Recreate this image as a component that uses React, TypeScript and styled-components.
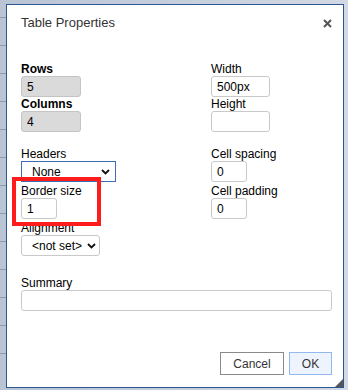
import React from "react";
import styled, { createGlobalStyle } from "styled-components";

const GlobalStyle = createGlobalStyle`
  html, body {
    margin: 0;
    padding: 0;
  }
  body {
    width: 348px;
    height: 390px;
    overflow: hidden;
    background: #c8d1de;
    font-family: "Liberation Sans", Arial, sans-serif;
  }
`;

const Page = styled.div`
  box-sizing: border-box;
  width: 348px;
  height: 390px;
  padding: 4px 4px 2px 6px;
  background:
    repeating-linear-gradient(to bottom, transparent 0 27px, #8f9aab 27px 28px) 0 -10px / 6px 100% no-repeat,
    linear-gradient(to right, #b9c4d4, #d2d9e4);
`;

const Dialog = styled.div`
  position: relative;
  box-sizing: border-box;
  width: 338px;
  height: 384px;
  border: 1px solid #2c5593;
  background: #fff;
  display: flex;
  flex-direction: column;
`;

const Header = styled.div`
  display: flex;
  align-items: center;
  justify-content: space-between;
  height: 15px;
  padding: 10px 11px 0 14px;
`;

const Title = styled.h1`
  margin: 0;
  font-size: 13px;
  font-weight: normal;
  line-height: 15px;
  color: #333;
`;

const Close = styled.button`
  display: flex;
  width: 9px;
  height: 9px;
  margin-top: 2px;
  padding: 0;
  border: 0;
  background: none;
  cursor: pointer;
`;

const Body = styled.div`
  padding: 32px 11px 0 14px;
`;

const Grid = styled.div`
  display: grid;
  grid-template-columns: 190px 1fr;
  row-gap: 15px;
`;

const Column = styled.div<{ $gap: number }>`
  display: flex;
  flex-direction: column;
  align-items: flex-start;
  gap: ${(p) => p.$gap}px;
`;

const Field = styled.div`
  display: flex;
  flex-direction: column;
  align-items: flex-start;
`;

const Label = styled.label<{ $bold?: boolean }>`
  display: block;
  font-size: 12px;
  line-height: 14px;
  font-weight: ${(p) => (p.$bold ? "bold" : "normal")};
  color: #000;
`;

const Input = styled.input<{ $width: string; $disabled?: boolean }>`
  box-sizing: border-box;
  width: ${(p) => p.$width};
  height: 21px;
  margin: 0;
  padding: 0 5px;
  border: 1px solid ${(p) => (p.$disabled ? "#c4c4c4" : "#c9c9c9")};
  border-radius: 3px;
  background: ${(p) => (p.$disabled ? "#dadada" : "#fff")};
  font-family: inherit;
  font-size: 12px;
  color: #000;
  outline: none;
`;

const SelectWrap = styled.div<{ $width: number }>`
  position: relative;
  width: ${(p) => p.$width}px;
  height: 21px;
`;

const Select = styled.select<{ $focused?: boolean }>`
  appearance: none;
  -webkit-appearance: none;
  box-sizing: border-box;
  width: 100%;
  height: 21px;
  margin: 0;
  padding: 0 0 0 10px;
  border: 1px solid ${(p) => (p.$focused ? "#3d6cb4" : "#c9c9c9")};
  border-radius: ${(p) => (p.$focused ? "0" : "3px")};
  background: #fff;
  font-family: inherit;
  font-size: 12px;
  color: #000;
  outline: none;
`;

const Chevron = styled.svg<{ $right: number }>`
  position: absolute;
  top: 8px;
  right: ${(p) => p.$right}px;
  pointer-events: none;
`;

const Summary = styled(Field)`
  margin-top: 20px;
`;

const Footer = styled.div`
  display: flex;
  justify-content: flex-end;
  gap: 5px;
  margin-top: auto;
  padding: 0 11px 12px 14px;
`;

const Button = styled.button<{ $primary?: boolean; $width: number }>`
  box-sizing: border-box;
  width: ${(p) => p.$width}px;
  height: 23px;
  padding: 0;
  border: 1px solid ${(p) => (p.$primary ? "#93b8ee" : "#8a8a8a")};
  background: ${(p) => (p.$primary ? "#eef4fd" : "#fff")};
  font-family: inherit;
  font-size: 12px;
  color: #333;
  cursor: pointer;
`;

const Highlight = styled.div`
  position: absolute;
  left: 5px;
  top: 172px;
  width: 89px;
  height: 49px;
  box-sizing: border-box;
  border: 4px solid #ff1c1c;
  pointer-events: none;
`;

const Grip = styled.svg`
  position: absolute;
  right: 0;
  bottom: 0;
`;

const ChevronIcon = ({ right }: { right: number }) => (
  <Chevron $right={right} width="9" height="6" viewBox="0 0 9 6">
    <path d="M1 1 L4.5 4.5 L8 1" fill="none" stroke="#111" strokeWidth="1.8" />
  </Chevron>
);

export default function App() {
  return (
    <Page>
      <GlobalStyle />
      <Dialog>
        <Header>
          <Title>Table Properties</Title>
          <Close aria-label="Close">
            <svg width="9" height="9" viewBox="0 0 9 9">
              <path d="M1 1 L8 8 M8 1 L1 8" stroke="#555" strokeWidth="2" />
            </svg>
          </Close>
        </Header>

        <Body>
          <Grid>
            <Column $gap={0}>
              <Field>
                <Label $bold>Rows</Label>
                <Input $width="60px" $disabled readOnly value="5" />
              </Field>
              <Field>
                <Label $bold>Columns</Label>
                <Input $width="60px" $disabled readOnly value="4" />
              </Field>
            </Column>
            <Column $gap={0}>
              <Field>
                <Label>Width</Label>
                <Input $width="59px" defaultValue="500px" />
              </Field>
              <Field>
                <Label>Height</Label>
                <Input $width="59px" defaultValue="" />
              </Field>
            </Column>

            <Column $gap={2}>
              <Field>
                <Label>Headers</Label>
                <SelectWrap $width={95}>
                  <Select $focused defaultValue="none">
                    <option value="none">None</option>
                  </Select>
                  <ChevronIcon right={6} />
                </SelectWrap>
              </Field>
              <Field>
                <Label>Border size</Label>
                <Input $width="36px" defaultValue="1" />
              </Field>
              <Field>
                <Label>Alignment</Label>
                <SelectWrap $width={79}>
                  <Select defaultValue="">
                    <option value="">&lt;not set&gt;</option>
                  </Select>
                  <ChevronIcon right={4} />
                </SelectWrap>
              </Field>
            </Column>
            <Column $gap={2}>
              <Field>
                <Label>Cell spacing</Label>
                <Input $width="36px" defaultValue="0" />
              </Field>
              <Field>
                <Label>Cell padding</Label>
                <Input $width="36px" defaultValue="0" />
              </Field>
            </Column>
          </Grid>

          <Summary>
            <Label>Summary</Label>
            <Input $width="100%" defaultValue="" />
          </Summary>
        </Body>

        <Footer>
          <Button $width={64}>Cancel</Button>
          <Button $width={43} $primary>
            OK
          </Button>
        </Footer>

        <Highlight />
        <Grip width="8" height="8" viewBox="0 0 8 8">
          <polygon points="8,0 8,8 0,8" fill="#555" />
        </Grip>
      </Dialog>
    </Page>
  );
}
